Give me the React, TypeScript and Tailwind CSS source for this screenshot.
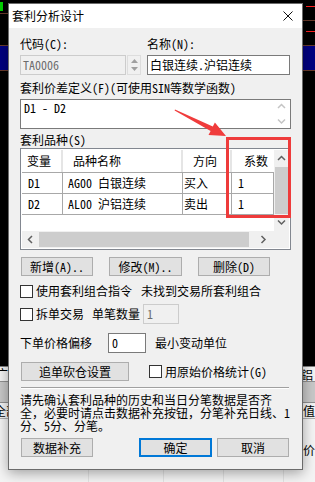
import React from "react";

const F = "font-['Noto_Sans_Mono_CJK_SC','Noto_Sans_CJK_SC',sans-serif] text-[12px] leading-[14px] text-black";
const BTN = "h-[19px] flex items-center justify-center border border-[#adadad] bg-[#e1e1e1] text-[12px] leading-[14px]";
const BOX = "w-[13px] h-[13px] border border-[#333333] bg-white shrink-0";

function Chevron({ dir, color = "#606060" }: { dir: "up" | "down" | "left" | "right"; color?: string }) {
  const d =
    dir === "up"
      ? "M1 6 L4.5 2.5 L8 6"
      : dir === "down"
      ? "M1 2.5 L4.5 6 L8 2.5"
      : dir === "left"
      ? "M6 1 L2.5 4.5 L6 8"
      : "M2.5 1 L6 4.5 L2.5 8";
  return (
    <svg width="9" height="9" viewBox="0 0 9 9">
      <path d={d} fill="none" stroke={color} strokeWidth="1.5" />
    </svg>
  );
}

function Background() {
  return (
    <>
      {/* top-left */}
      <div className="absolute left-0 top-[2px] w-[3px] h-[9px] bg-[#00d000]" />
      <div className="absolute left-0 top-[13px] w-[8px] h-[1px] bg-[#6a3a2a]" />
      {/* right red ticks */}
      <div className="absolute left-[306px] top-[6px] w-[9px] h-[1px] bg-[#ff2020]" />
      <div className="absolute left-[306px] top-[31px] w-[9px] h-[1px] bg-[#ff2020]" />
      <div className="absolute left-[306px] top-[56px] w-[9px] h-[1px] bg-[#ff2020]" />
      <div className="absolute left-[302px] top-[20px] w-[13px] h-[1px] bg-[#6a3a2a]" />
      {/* blue band */}
      <div className="absolute left-0 top-[45px] w-[315px] h-[26px] bg-[#000080] border-y border-[#6a3a2a]" />
      {/* bottom region left */}
      <div className="absolute left-0 top-[366px] w-[315px] h-[116px] bg-[#f4f4f4]" />
      <div className="absolute left-0 top-[366px] w-[315px] h-[1px] bg-[#808080]" />
      <div className="absolute left-0 top-[381px] w-[315px] h-[22px] bg-[#c8c8c8] border-y border-[#909090]" />
      <div className="absolute left-0 top-[418px] w-[315px] h-[1px] bg-[#b0b0b0]" />
      <div className="absolute left-[88px] top-[419px] w-[1px] h-[63px] bg-[#e2e2e2]" />
      <div className="absolute left-[163px] top-[419px] w-[1px] h-[63px] bg-[#e2e2e2]" />
      <div className="absolute left-[223px] top-[419px] w-[1px] h-[63px] bg-[#e2e2e2]" />
      <div className="absolute left-[283px] top-[419px] w-[1px] h-[63px] bg-[#e2e2e2]" />
      <div className={"absolute left-[-4px] top-[367px] " + F}>广</div>
      <div className={"absolute left-[-6px] top-[404px] " + F}>全部</div>
      <div className={"absolute left-[301px] top-[368px] " + F}>鋁</div>
      <div className={"absolute left-[303px] top-[404px] " + F}>值</div>
      <div className={"absolute left-[303px] top-[443px] text-[#2a6fc0] " + F}>价</div>
    </>
  );
}

function Table() {
  const cell = "h-full flex items-center border-r border-[#a8a8a8]";
  return (
    <div className="mt-[1px] w-[271px] h-[102px] border border-[#828790] bg-white p-[1px] flex flex-col">
      <div className="flex h-[81px]">
        <div className="w-[252px] flex flex-col">
          <div className="h-[23px] flex border-b border-[#a8a8a8]">
            <div className="w-[41px] h-full flex items-center pl-[5px] border-r-2 border-[#e5e5e5]">变量</div>
            <div className="w-[120px] h-full flex items-center pl-[10px] border-r-2 border-[#e5e5e5]">品种名称</div>
            <div className="w-[49px] h-full flex items-center pl-[10px] border-r-2 border-[#e5e5e5]">方向</div>
            <div className="w-[42px] h-full flex items-center pl-[12px]">系数</div>
          </div>
          <div className="h-[21px] flex border-b border-[#a8a8a8]">
            <div className={"w-[41px] pl-[6px] " + cell}>D1</div>
            <div className={"w-[120px] pl-[5px] " + cell}>AG00 白银连续</div>
            <div className={"w-[49px] pl-[1px] " + cell}>买入</div>
            <div className="w-[42px] h-full flex items-center pl-[6px] border-r border-[#a8a8a8]">1</div>
          </div>
          <div className="h-[21px] flex border-b border-[#a8a8a8]">
            <div className={"w-[41px] pl-[6px] " + cell}>D2</div>
            <div className={"w-[120px] pl-[5px] " + cell}>AL00 沪铝连续</div>
            <div className={"w-[49px] pl-[1px] " + cell}>卖出</div>
            <div className="w-[42px] h-full flex items-center pl-[6px] border-r border-[#a8a8a8]">1</div>
          </div>
        </div>
        <div className="w-[17px] h-full bg-[#f0f0f0] flex flex-col">
          <div className="h-[17px] flex items-center justify-center">
            <Chevron dir="up" />
          </div>
          <div className="h-[47px] mx-[1px] bg-[#cdcdcd]" />
          <div className="flex-1" />
          <div className="h-[17px] flex items-center justify-center">
            <Chevron dir="down" />
          </div>
        </div>
      </div>
      <div className="flex h-[17px] bg-[#f0f0f0]">
        <div className="w-[17px] flex items-center justify-center">
          <Chevron dir="left" />
        </div>
        <div className="w-[212px] my-[1px] bg-[#cdcdcd]" />
        <div className="w-[6px]" />
        <div className="w-[17px] flex items-center justify-center">
          <Chevron dir="right" />
        </div>
        <div className="w-[17px]" />
      </div>
    </div>
  );
}

export default function App() {
  return (
    <div className={"relative w-[315px] h-[482px] overflow-hidden bg-black " + F}>
      <Background />
      <div className="absolute left-[8px] top-[3px] w-[295px] h-[467px] border border-[#6b6b6b] bg-[#f0f0f0] flex flex-col shadow-[0_3px_12px_rgba(0,0,0,0.35)]">
        {/* title bar */}
        <div className="h-[24px] bg-white flex items-center justify-between pl-[3px] pr-[9px]">
          <span className="text-[12px] leading-[14px]">套利分析设计</span>
          <svg width="10" height="10" viewBox="0 0 10 10">
            <path d="M0.5 0.5 L9.5 9.5 M9.5 0.5 L0.5 9.5" stroke="#111" strokeWidth="1" />
          </svg>
        </div>
        {/* body */}
        <div className="flex flex-col px-[11px]">
          <div className="mt-[9px] h-[14px] flex">
            <span className="w-[127px]">代码(C):</span>
            <span>名称(N):</span>
          </div>
          <div className="mt-[4px] h-[20px] flex">
            <div className="w-[106px] h-full border border-[#cccccc] bg-[#f0f0f0] text-[#6d6d6d] flex items-center pl-[2px]">TA0006</div>
            <div className="ml-[1px] w-[14px] h-full border border-[#dddddd] bg-[#f0f0f0] flex flex-col items-center justify-around py-[1px]">
              <svg width="7" height="4" viewBox="0 0 7 4">
                <path d="M0 4 L3.5 0 L7 4 Z" fill="#a0a0a0" />
              </svg>
              <svg width="7" height="4" viewBox="0 0 7 4">
                <path d="M0 0 L3.5 4 L7 0 Z" fill="#a0a0a0" />
              </svg>
            </div>
            <div className="ml-[6px] w-[143px] h-full border border-[#7a7a7a] bg-white flex items-center pl-[2px]">白银连续.沪铝连续</div>
          </div>
          <div className="mt-[6px] h-[14px]">套利价差定义(F)(可使用SIN等数学函数)</div>
          <div className="mt-[4px] h-[30px] w-[271px] border border-[#7a7a7a] bg-white flex">
            <div className="flex-1 pl-[3px] pt-[1px]">D1 - D2</div>
            <div className="w-[15px] mr-[1px] h-full flex flex-col items-center justify-between py-[2px]">
              <Chevron dir="up" color="#c4c4c4" />
              <Chevron dir="down" color="#c4c4c4" />
            </div>
          </div>
          <div className="mt-[4px] h-[14px]">套利品种(S)</div>
          <Table />
          <div className="mt-[7px] flex">
            <div className={"ml-[1px] w-[72px] " + BTN}>新增(A)..</div>
            <div className={"ml-[16px] w-[73px] " + BTN}>修改(M)..</div>
            <div className={"ml-[16px] w-[72px] " + BTN}>删除(D)</div>
          </div>
          <div className="mt-[8px] h-[14px] flex items-center">
            <div className={BOX} />
            <span className="ml-[3px]">使用套利组合指令</span>
            <span className="ml-[9px]">未找到交易所套利组合</span>
          </div>
          <div className="mt-[6px] h-[20px] flex items-center">
            <div className={BOX} />
            <span className="ml-[3px]">拆单交易</span>
            <span className="ml-[8px]">单笔数量</span>
            <div className="ml-[3px] w-[36px] h-[20px] border border-[#cccccc] bg-[#f0f0f0] text-[#6d6d6d] flex items-center pl-[3px]">1</div>
          </div>
          <div className="mt-[9px] h-[20px] flex items-center">
            <span>下单价格偏移</span>
            <div className="ml-[16px] w-[38px] h-[20px] border border-[#7a7a7a] bg-white flex items-center pl-[3px]">0</div>
            <span className="ml-[9px]">最小变动单位</span>
          </div>
          <div className="mt-[9px] h-[19px] flex items-center">
            <div className={"ml-[1px] w-[108px] " + BTN}>追单砍仓设置</div>
            <div className={"ml-[20px] " + BOX} />
            <span className="ml-[3px]">用原始价格统计(G)</span>
          </div>
          <div className="mt-[6px] ml-[1px] w-[268px] h-[2px] border-t border-[#a0a0a0] border-b border-b-white" />
          <div className="mt-[4px] leading-[13px]">
            请先确认套利品种的历史和当日分笔数据是否齐
            <br />
            全，必要时请点击数据补充按钮，分笔补充日线、1
            <br />
            分、5分、分笔。
          </div>
          <div className="mt-[6px] flex">
            <div className={"ml-[1px] w-[72px] " + BTN}>数据补充</div>
            <div className="ml-[46px] w-[73px] h-[19px] flex items-center justify-center border-2 border-[#0078d7] bg-[#e1e1e1]">确定</div>
            <div className={"ml-[5px] w-[72px] " + BTN}>取消</div>
          </div>
        </div>
      </div>
      {/* red annotations */}
      <svg className="absolute left-0 top-0" width="315" height="482" viewBox="0 0 315 482">
        <polygon
          points="175,109.5 212.8,126.5 214.9,122.5 226,136 208.5,134.9 210.6,130.9 174.6,110.5"
          fill="#f03c3c"
        />
      </svg>
      <div className="absolute left-[226px] top-[137px] w-[65px] h-[81px] border-[3px] border-[#ee3b3b]" />
    </div>
  );
}
